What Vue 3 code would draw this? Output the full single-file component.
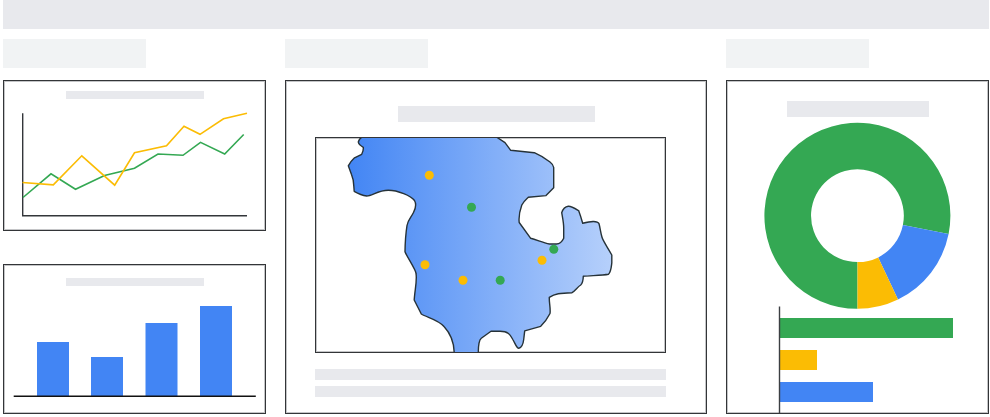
<script setup>
const columnBars = [
  { x: 37, top: 342 },
  { x: 91, top: 357 },
  { x: 145.5, top: 323 },
  { x: 200, top: 306 },
]

const rowBars = [
  { y: 318, width: 173, color: '#34a853' },
  { y: 350, width: 37, color: '#fbbc04' },
  { y: 382, width: 93, color: '#4285f4' },
]

const pins = [
  { x: 429.3, y: 175.3, color: '#fbbc04' },
  { x: 471.5, y: 207.3, color: '#34a853' },
  { x: 425, y: 264.7, color: '#fbbc04' },
  { x: 463, y: 280.2, color: '#fbbc04' },
  { x: 500.2, y: 280.2, color: '#34a853' },
  { x: 542, y: 260.3, color: '#fbbc04' },
  { x: 553.8, y: 249.2, color: '#34a853' },
]
</script>

<template>
  <main class="page">
    <header class="topbar"></header>

    <div class="columns">
      <section class="column">
        <div class="label"></div>
        <div class="stack">
          <article class="card trend">
            <div class="title small"></div>
            <svg class="chart" viewBox="4 99 261 131" fill="none">
              <path d="M22.7 113.3V215.7H247" stroke="#33363a" stroke-width="1.4" />
              <path
                d="M23 197.5L51 173.8L75.5 189.3L104.5 175.5L134.5 168.3L158 154L183 155.3L200.5 142.4L224.7 154L243.7 134.5"
                stroke="#34a853"
                stroke-width="1.6"
              />
              <path
                d="M22.5 182.5L53.3 184.8L81.8 155.8L114.7 185.2L134.5 152.8L166.5 145.8L184 126.2L200 134.3L223.5 118.8L247 113.3"
                stroke="#fbbc04"
                stroke-width="1.6"
              />
            </svg>
          </article>

          <article class="card totals">
            <div class="title small"></div>
            <svg class="chart" viewBox="4 286 261 127">
              <rect
                v-for="bar in columnBars"
                :key="bar.x"
                :x="bar.x"
                :y="bar.top"
                width="32"
                :height="396 - bar.top"
                fill="#4285f4"
              />
              <path d="M13.7 396.3H255.8" stroke="#111" stroke-width="1.4" />
            </svg>
          </article>
        </div>
      </section>

      <section class="column">
        <div class="label"></div>
        <article class="card region">
          <div class="title wide"></div>
          <div class="map">
            <svg class="chart" viewBox="316 138 349 214">
              <defs>
                <linearGradient id="land" gradientUnits="userSpaceOnUse" x1="348" y1="0" x2="612" y2="0">
                  <stop offset="0" stop-color="#4285f4" />
                  <stop offset="1" stop-color="#b6d0fb" />
                </linearGradient>
              </defs>
              <path
                d="M362.3 137Q359.2 138.5 358.3 142Q358.5 144.5 363.3 147.3Q363.6 150.5 361.7 154.3L354.5 157.8Q351 161 348.3 165.8L351.5 174.5Q353.8 180 353.8 186L354.2 191.3Q361 195.3 366.7 196C372 196 378 190.3 388.3 190.3C398 190.3 411 196 414.5 200.5C416.5 204 415.8 208 413.5 212.5C411 217.5 407.8 220 407 225.5Q405.2 237 405 251.7C407 257 416 270 416 273.5C417.3 280 414.8 290 414.2 300L421.3 314C427 317.5 438 319.5 444 326.5C451 334 454 342 454.2 353H478.3C478.3 346 479 340 481.3 338.2L491 331.3H500C509 331.3 510.5 335.5 512.8 339.5C515 343 516.5 348.3 518.8 348.3C522 347.5 523.3 343 523.7 339.5L524.7 330.8L540.7 326.3C544.5 322.5 548 317.5 550 313.5C550.8 308.5 549 303 549.3 297.3C555 293.5 560 293 572 292.7C575.5 290.5 577.5 287 580.7 285C583 283 583.2 280 583.3 276.3C590 275.5 602 275.5 608.5 274.2C611 272 611.3 267 611.8 263V255C608 248 603 241 602 237.3C600.5 232 600 227 599 223.7C597 220 590 221.5 582.7 223.3C581.5 219 580.3 215 578.7 210.7C575 208.5 571 206 568.3 206.3C565.5 206.7 562.8 209.5 561.7 212.7C562.8 219 563.7 223 563.7 228V238.3C562 242 559 244 556.5 244H549.5C543 242.5 537 240 530.7 238.3L519.2 222.5C518.5 216 520 210 521.8 205C523.5 201.5 526 199.5 528.3 197.3L546 195.6L553.7 187.7V167.5Q553.3 164.5 550 162Q543 156.5 534.3 152.7L510.7 150.3L505 142.7L496.5 137"
                fill="url(#land)"
                stroke="#263238"
                stroke-width="1.4"
                stroke-linejoin="round"
              />
              <circle v-for="(pin, i) in pins" :key="i" :cx="pin.x" :cy="pin.y" r="4.5" :fill="pin.color" />
            </svg>
          </div>
          <div class="notes">
            <div class="note"></div>
            <div class="note"></div>
          </div>
        </article>
      </section>

      <section class="column">
        <div class="label"></div>
        <article class="card share">
          <div class="title medium"></div>
          <svg class="chart" viewBox="727 117 261 296">
            <path
              d="M857.5 308.8A93 93 0 1 1 948.6 234L902.9 225A46.4 46.4 0 1 0 857.5 262.1Z"
              fill="#34a853"
            />
            <path d="M948.6 234A93 93 0 0 1 898 299.5L878.2 257.4A46.4 46.4 0 0 0 902.9 225Z" fill="#4285f4" />
            <path d="M898 299.5A93 93 0 0 1 857.5 308.8V262.1A46.4 46.4 0 0 0 878.2 257.4Z" fill="#fbbc04" />
            <rect
              v-for="bar in rowBars"
              :key="bar.y"
              x="780"
              :y="bar.y"
              :width="bar.width"
              height="20"
              :fill="bar.color"
            />
            <path d="M779.5 306.5V413" stroke="#3c3f43" stroke-width="1.4" />
          </svg>
        </article>
      </section>
    </div>
  </main>
</template>

<style>
body {
  margin: 0;
  background: #fff;
}
</style>

<style scoped>
.page {
  padding: 0 1px 3px 3px;
}

.topbar {
  height: 29px;
  margin-bottom: 10px;
  background: #e8e9ed;
}

.columns {
  display: grid;
  grid-template-columns: 263fr 422fr 263fr;
  gap: 19px;
}

.column {
  display: flex;
  flex-direction: column;
  gap: 12px;
  min-width: 0;
}

.label {
  width: 143px;
  max-width: 100%;
  height: 29px;
  background: #f1f3f4;
}

.stack {
  display: flex;
  flex-direction: column;
  gap: 33px;
}

.card,
.map {
  border: 1px solid #333538;
  box-shadow: inset 0 0 0 1px #c4c5c7;
}

.chart {
  display: block;
  width: 100%;
  height: auto;
}

.title {
  max-width: 100%;
  margin: 0 auto;
  background: #e8e9ed;
}

.small {
  width: 138px;
  height: 8px;
}

.medium {
  width: 142px;
  height: 16px;
}

.wide {
  width: 197px;
  height: 16px;
}

.trend {
  padding-top: 10px;
}

.totals {
  padding-top: 13px;
}

.region {
  padding: 25px 0 16px;
}

.map {
  margin: 15px 40px 16px 29px;
}

.notes {
  display: flex;
  flex-direction: column;
  gap: 6px;
  margin: 0 40px 0 29px;
}

.note {
  height: 11px;
  background: #e8e9ed;
}

.share {
  padding-top: 20px;
}
</style>
